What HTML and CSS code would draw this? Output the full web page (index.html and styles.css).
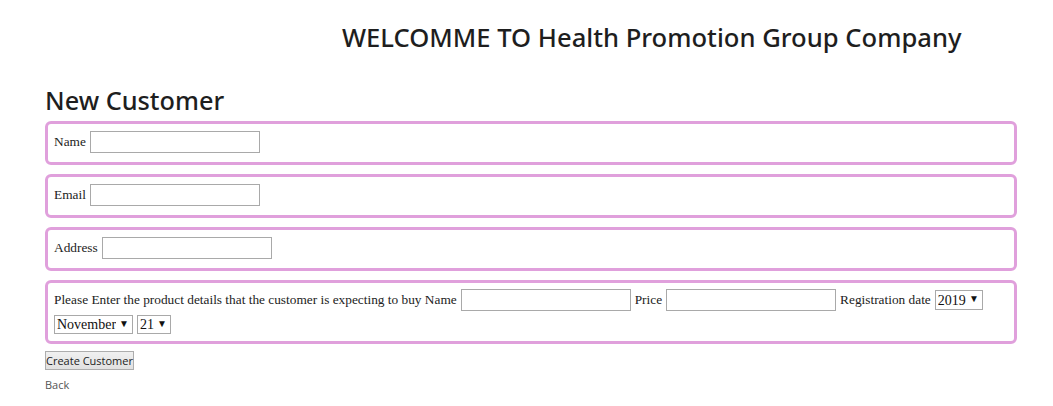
FILE: index.html
```html
<!DOCTYPE html>
<html>
<head>
<meta charset="utf-8">
<link rel="stylesheet" href="styles.css">
</head>
<body>
<header class="top">
  <h2 class="welcome">WELCOMME TO Health Promotion Group Company</h2>
</header>
<main class="page">
  <h2 class="title">New Customer</h2>
  <form class="form">
    <div class="box">
      <label class="lbl">Name</label>
      <input class="field" type="text">
    </div>
    <div class="box">
      <label class="lbl">Email</label>
      <input class="field" type="text">
    </div>
    <div class="box">
      <label class="lbl">Address</label>
      <input class="field" type="text">
    </div>
    <div class="box box-wrap">
      <label class="lbl">Please Enter the product details that the customer is expecting to buy Name</label>
      <input class="field" type="text">
      <label class="lbl">Price</label>
      <input class="field" type="text">
      <label class="lbl">Registration date</label>
      <span class="sel sel-year"><select><option>2019</option></select></span>
      <span class="sel sel-month"><select><option>November</option></select></span>
      <span class="sel sel-day"><select><option>21</option></select></span>
    </div>
    <button class="btn" type="button">Create Customer</button>
  </form>
  <a class="back" href="#">Back</a>
</main>
</body>
</html>
```
FILE: styles.css
```css
html, body {
  margin: 0;
  padding: 0;
  background: #fff;
}
body {
  font-family: "Liberation Serif", serif;
  color: #222;
}
.top {
  padding: 20px 0 0 342px;
  height: 68px;
  box-sizing: border-box;
}
.welcome {
  margin: 0;
  font-family: "Noto Sans", "Open Sans", sans-serif;
  font-weight: 500;
  font-size: 25.6px;
  line-height: 36px;
  color: #1e1e1e;
}
.page {
  padding: 0 36px 0 45px;
}
.title {
  margin: 0;
  font-family: "Noto Sans", "Open Sans", sans-serif;
  font-weight: 500;
  font-size: 25.3px;
  line-height: 36px;
  height: 53px;
  padding-top: 14px;
  box-sizing: border-box;
  color: #1e1e1e;
}
.form {
  display: flex;
  flex-direction: column;
  align-items: flex-start;
}
.box {
  align-self: stretch;
  border: 3px solid #e0a0dc;
  border-radius: 6px;
  padding: 6px 6px 9px;
  margin-bottom: 9px;
  display: flex;
  flex-wrap: wrap;
  align-items: center;
  column-gap: 4px;
  row-gap: 4px;
  font-size: 13.33px;
  min-height: 44px;
  box-sizing: border-box;
}
.box-wrap {
  min-height: 62px;
  padding-bottom: 7px;
  margin-bottom: 7px;
}
.lbl {
  color: #222;
  font-size: 13.33px;
}
.field {
  width: 170px;
  height: 22px;
  box-sizing: border-box;
  border: 1px solid #a9a9a9;
  padding: 1px 2px;
  font-family: "Liberation Serif", serif;
  font-size: 13.33px;
  background: #fff;
  margin: 0;
}
.sel {
  position: relative;
  display: inline-block;
}
.sel select {
  -webkit-appearance: none;
  appearance: none;
  border: 1px solid #a9a9a9;
  border-radius: 0;
  background: #fff;
  font-family: "Liberation Serif", serif;
  font-size: 14px;
  color: #111;
  padding: 0 16px 0 2px;
  margin: 0;
  box-sizing: border-box;
  height: 19px;
  line-height: 17px;
}
.sel::after {
  content: "\25BC";
  position: absolute;
  right: 4px;
  top: 2px;
  font-size: 10px;
  line-height: 14px;
  color: #111;
  pointer-events: none;
}
.sel-year select { width: 48px; height: 20px; }
.sel-month select { width: 79px; }
.sel-day select { width: 34px; }
.btn {
  font-family: "Open Sans", "Noto Sans", sans-serif;
  font-size: 11px;
  color: #222;
  background: linear-gradient(#f0f0f0, #e1e1e1);
  border: 1px solid #adadad;
  border-radius: 0;
  height: 19px;
  width: 89px;
  padding: 0;
  margin: 0;
  line-height: 17px;
}
.back {
  display: block;
  margin-top: 7px;
  font-family: "Open Sans", "Noto Sans", sans-serif;
  font-size: 11px;
  color: #555;
  text-decoration: none;
}
```
